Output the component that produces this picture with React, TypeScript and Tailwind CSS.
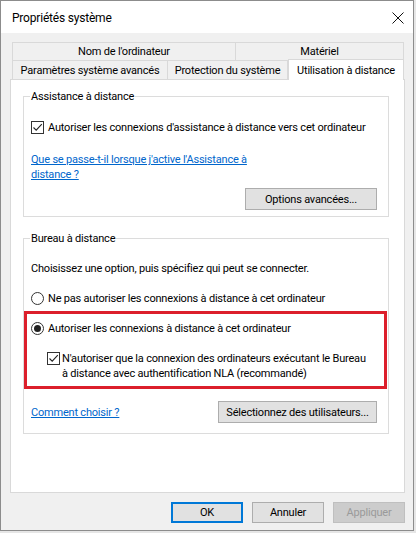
import React from "react";

function CheckBox({ checked }: { checked: boolean }) {
  return (
    <span className="flex h-[13px] w-[13px] shrink-0 items-center justify-center border border-[#333333] bg-white">
      {checked && (
        <svg width="11" height="11" viewBox="0 0 11 11">
          <path d="M1.5 5.5 L4.2 8.2 L9.8 2.2" fill="none" stroke="#222" strokeWidth="1.1" />
        </svg>
      )}
    </span>
  );
}

function Radio({ checked }: { checked: boolean }) {
  return (
    <span className="flex h-[13px] w-[13px] shrink-0 items-center justify-center rounded-full border border-[#333333] bg-white">
      {checked && <span className="h-[7px] w-[7px] rounded-full bg-[#222222]" />}
    </span>
  );
}

function WinButton({
  label,
  width,
  variant = "normal",
}: {
  label: string;
  width: string;
  variant?: "normal" | "default" | "disabled";
}) {
  const styles = {
    normal: "border border-[#adadad] bg-[#e1e1e1] text-black",
    default: "border-2 border-[#0078d7] bg-[#e1e1e1] text-black",
    disabled: "border border-[#bfbfbf] bg-[#cccccc] text-[#9a9a9a]",
  };
  return (
    <button className={`${width} flex items-center justify-center whitespace-nowrap ${styles[variant]}`}>
      {label}
    </button>
  );
}

function Tab({ label, width, selected }: { label: string; width: string; selected?: boolean }) {
  return selected ? (
    <div
      className={`${width} relative z-10 -mt-[2px] -mb-px flex h-[21px] items-center justify-center whitespace-nowrap border border-b-0 border-[#d9d9d9] bg-white`}
    >
      {label}
    </div>
  ) : (
    <div
      className={`${width} flex items-center justify-center whitespace-nowrap border border-b-0 border-r-0 border-[#d9d9d9] bg-[#f0f0f0] last:border-r`}
    >
      {label}
    </div>
  );
}

export default function App() {
  return (
    <div className="h-[533px] w-[416px] whitespace-nowrap bg-[#e6e6e6] font-['Roboto','Liberation_Sans',sans-serif] text-[11px] leading-[15px] tracking-[-0.2px] text-black">
      <div className="flex h-[531px] w-[414px] flex-col border border-[#8c8c8c] bg-[#f0f0f0]">
        {/* title bar */}
        <div className="flex h-[32px] items-center justify-between bg-white pl-[11px] pr-[9px]">
          <span className="pt-[2px] text-[12px]">Propriétés système</span>
          <svg width="12" height="12" viewBox="0 0 12 12" className="mt-[2px]">
            <path d="M0.5 0.5 L11.5 11.5 M11.5 0.5 L0.5 11.5" stroke="#111" strokeWidth="1" />
          </svg>
        </div>

        {/* tabs */}
        <div className="ml-[11px] mt-[9px] flex h-[18px] w-[392px]">
          <Tab label="Nom de l'ordinateur" width="w-[223px]" />
          <Tab label="Matériel" width="w-[169px]" />
        </div>
        <div className="ml-[11px] flex h-[19px] w-[392px] items-end">
          <div className="flex h-[19px]">
            <Tab label="Paramètres système avancés" width="w-[155px]" />
            <Tab label="Protection du système" width="w-[121px] border-r" />
          </div>
          <Tab label="Utilisation à distance" width="w-[116px]" selected />
        </div>

        {/* panel */}
        <div className="ml-[9px] flex h-[414px] w-[395px] flex-col border border-[#d9d9d9] bg-white px-[12px]">
          <fieldset className="mt-[9px] w-[366px] border border-[#dcdcdc] pb-[6px] pl-[7px] pr-[11px]">
            <legend className="-ml-[1px] px-[1px] leading-[15px]">Assistance à distance</legend>
            <div className="mt-[16px] flex h-[15px] items-center gap-[4px]">
              <CheckBox checked />
              <span>Autoriser les connexions d'assistance à distance vers cet ordinateur</span>
            </div>
            <div className="mt-[17px] text-[#0066cc] underline">
              Que se passe-t-il lorsque j'active l'Assistance à
              <br />
              distance ?
            </div>
            <div className="mt-[6px] flex justify-end">
              <WinButton label="Options avancées..." width="w-[132px] h-[22px]" />
            </div>
          </fieldset>

          <fieldset className="mt-[14px] w-[366px] border border-[#dcdcdc] pb-[10px]">
            <legend className="ml-[6px] px-[1px] leading-[15px]">Bureau à distance</legend>
            <div className="ml-[7px] mt-[15px]">Choisissez une option, puis spécifiez qui peut se connecter.</div>
            <div className="ml-[7px] mt-[15px] flex h-[15px] items-center gap-[4px]">
              <Radio checked={false} />
              <span>Ne pas autoriser les connexions à distance à cet ordinateur</span>
            </div>
            <div className="mr-[1px] mt-[5px] h-[78px] border-[3px] border-[#dc1f2b] pl-[4px]">
              <div className="mt-[7px] flex h-[15px] items-center gap-[4px]">
                <Radio checked />
                <span>Autoriser les connexions à distance à cet ordinateur</span>
              </div>
              <div className="ml-[16px] mt-[15px] flex gap-[2px]">
                <span className="mt-[1px]">
                  <CheckBox checked />
                </span>
                <span>
                  N'autoriser que la connexion des ordinateurs exécutant le Bureau
                  <br />à distance avec authentification NLA (recommandé)
                </span>
              </div>
            </div>
            <div className="mt-[12px] flex items-center justify-between pl-[7px] pr-[11px]">
              <span className="text-[#0066cc] underline">Comment choisir ?</span>
              <WinButton label="Sélectionnez des utilisateurs..." width="w-[159px] h-[22px]" />
            </div>
          </fieldset>
        </div>

        {/* bottom buttons */}
        <div className="mt-[9px] flex justify-end gap-[9px] pr-[8px]">
          <WinButton label="OK" width="w-[72px] h-[21px]" variant="default" />
          <WinButton label="Annuler" width="w-[72px] h-[21px]" />
          <WinButton label="Appliquer" width="w-[72px] h-[21px]" variant="disabled" />
        </div>
      </div>
    </div>
  );
}
